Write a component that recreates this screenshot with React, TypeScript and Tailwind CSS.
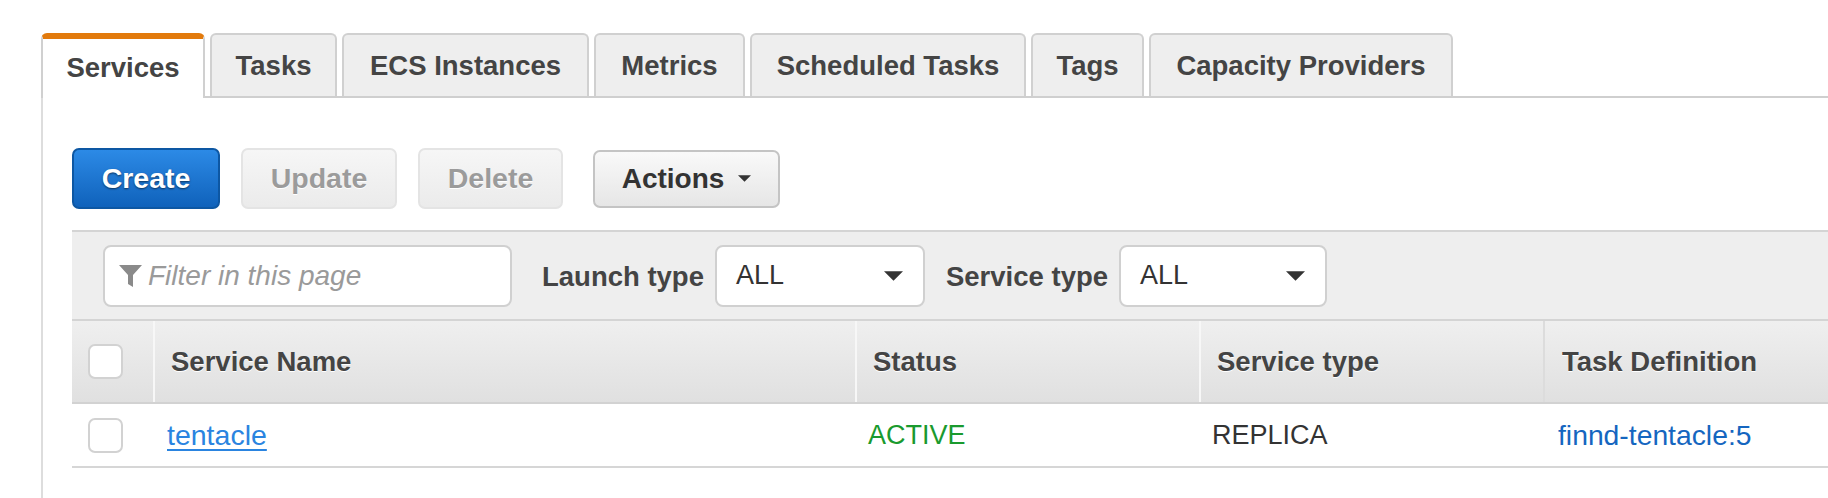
import React from 'react';

const tabs: [string, string][] = [
  ['Services', 'w-[164px]'],
  ['Tasks', 'w-[127px]'],
  ['ECS Instances', 'w-[247px]'],
  ['Metrics', 'w-[151px]'],
  ['Scheduled Tasks', 'w-[276px]'],
  ['Tags', 'w-[113px]'],
  ['Capacity Providers', 'w-[304px]'],
];

function Caret({ className }: { className?: string }) {
  return (
    <svg viewBox="0 0 20 10" className={className} aria-hidden>
      <path d="M0 0 H20 L10 10 Z" fill="currentColor" />
    </svg>
  );
}

function Funnel() {
  return (
    <svg viewBox="0 0 23 22" className="w-[23px] h-[22px] shrink-0" aria-hidden>
      <path d="M0 0 H23 L14 10 V22 L9 19 V10 Z" fill="#8a8a8a" />
    </svg>
  );
}

function Checkbox() {
  return <div className="w-[35px] h-[35px] rounded-[7px] border-2 border-[#d2d2d2] bg-white" />;
}

export default function App() {
  return (
    <div className="w-full h-[498px] bg-white overflow-hidden font-['Liberation_Sans',Arial,sans-serif]">
      {/* Tab strip */}
      <div className="mt-[33px] ml-[41px] flex items-end gap-[5px] border-b-2 border-[#cfcfcf]">
        {tabs.map(([t, w], i) =>
          i === 0 ? (
            <div
              key={t}
              className={`${w} relative -mb-[2px] h-[65px] pb-[2px] flex items-center justify-center bg-white rounded-t-[6px] border-2 border-b-0 border-[#d0d0d0] border-t-[6px] border-t-[#e27a0c] text-[27.5px] font-bold text-[#444]`}
            >
              {t}
            </div>
          ) : (
            <div
              key={t}
              className={`${w} h-[63px] flex items-center justify-center bg-[#eeeeee] rounded-t-[6px] border-2 border-b-0 border-[#d0d0d0] text-[27.5px] font-bold text-[#444]`}
            >
              {t}
            </div>
          )
        )}
      </div>

      {/* Content */}
      <div className="ml-[41px] border-l-2 border-[#dddddd] h-[400px] pl-[29px] pt-[50px]">
        {/* Buttons */}
        <div className="flex items-center">
          <button className="w-[148px] h-[61px] rounded-[7px] border-2 border-[#0d57a3] bg-gradient-to-b from-[#2c8ae6] to-[#0f62bb] text-white text-[28.5px] font-bold [text-shadow:0_1px_2px_rgba(0,0,0,0.55)]">
            Create
          </button>
          <button className="ml-[21px] w-[156px] h-[61px] rounded-[7px] border-2 border-[#e4e4e4] bg-gradient-to-b from-[#f6f6f6] to-[#ebebeb] text-[#9b9b9b] text-[28.5px] font-bold [text-shadow:0_1px_0_#fff]">
            Update
          </button>
          <button className="ml-[21px] w-[145px] h-[61px] rounded-[7px] border-2 border-[#e4e4e4] bg-gradient-to-b from-[#f6f6f6] to-[#ebebeb] text-[#9b9b9b] text-[28.5px] font-bold [text-shadow:0_1px_0_#fff]">
            Delete
          </button>
          <button className="ml-[30px] w-[187px] h-[58px] rounded-[7px] border-2 border-[#c4c4c4] bg-gradient-to-b from-[#f9f9f9] to-[#e6e6e6] text-[#333] text-[28px] font-bold flex items-center justify-center gap-[14px]">
            Actions
            <Caret className="w-[13px] h-[7px] text-[#333]" />
          </button>
        </div>

        {/* Filter band */}
        <div className="mt-[21px] border-t-2 border-b-2 border-[#d4d4d4] bg-[#eeeeee] h-[91px] pl-[31px] flex items-center">
          <div className="w-[409px] h-[62px] rounded-[8px] border-2 border-[#d0d0d0] bg-white flex items-center pl-[14px] gap-[6px]">
            <Funnel />
            <span className="italic text-[28px] text-[#9a9a9a]">Filter in this page</span>
          </div>
          <span className="ml-[30px] text-[27.5px] font-bold text-[#444] pt-[3px]">Launch type</span>
          <div className="ml-[11px] w-[210px] h-[62px] rounded-[8px] border-2 border-[#d0d0d0] bg-white flex items-center justify-between pl-[19px] pr-[20px]">
            <span className="text-[27px] text-[#333]">ALL</span>
            <Caret className="w-[19px] h-[10px] text-[#333]" />
          </div>
          <span className="ml-[21px] text-[27.5px] font-bold text-[#444] pt-[3px]">Service type</span>
          <div className="ml-[11px] w-[208px] h-[62px] rounded-[8px] border-2 border-[#d0d0d0] bg-white flex items-center justify-between pl-[19px] pr-[20px]">
            <span className="text-[27px] text-[#333]">ALL</span>
            <Caret className="w-[19px] h-[10px] text-[#333]" />
          </div>
        </div>

        {/* Table header */}
        <div className="flex h-[83px] bg-gradient-to-b from-[#efefef] to-[#e0e0e0] border-b-2 border-[#d2d2d2] text-[27.5px] font-bold text-[#444] [text-shadow:0_1px_0_#fff]">
          <div className="w-[81px] shrink-0 flex items-center pl-[16px]">
            <Checkbox />
          </div>
          <div className="w-[702px] shrink-0 flex items-center pl-[16px] border-l-2 border-[#f7f7f7]">Service Name</div>
          <div className="w-[344px] shrink-0 flex items-center pl-[16px] border-l-2 border-[#f7f7f7]">Status</div>
          <div className="w-[344px] shrink-0 flex items-center pl-[16px] border-l-2 border-[#f7f7f7]">Service type</div>
          <div className="flex-1 flex items-center pl-[17px] border-l-2 border-[#dcdcdc] whitespace-nowrap">Task Definition</div>
        </div>

        {/* Table row */}
        <div className="flex h-[64px] border-b-2 border-[#d6d6d6] text-[27px] whitespace-nowrap">
          <div className="w-[81px] shrink-0 flex items-center pl-[16px]">
            <Checkbox />
          </div>
          <div className="w-[702px] shrink-0 flex items-center pl-[14px]">
            <a className="text-[#2a84e0] text-[28.5px] underline underline-offset-[4px] decoration-[2px]">tentacle</a>
          </div>
          <div className="w-[344px] shrink-0 flex items-center pl-[13px] text-[#1a9a2e]">ACTIVE</div>
          <div className="w-[344px] shrink-0 flex items-center pl-[13px] text-[#333]">REPLICA</div>
          <div className="flex-1 flex items-center pl-[15px] text-[#1566c0] text-[28.3px]">finnd-tentacle:5</div>
        </div>
      </div>
    </div>
  );
}
